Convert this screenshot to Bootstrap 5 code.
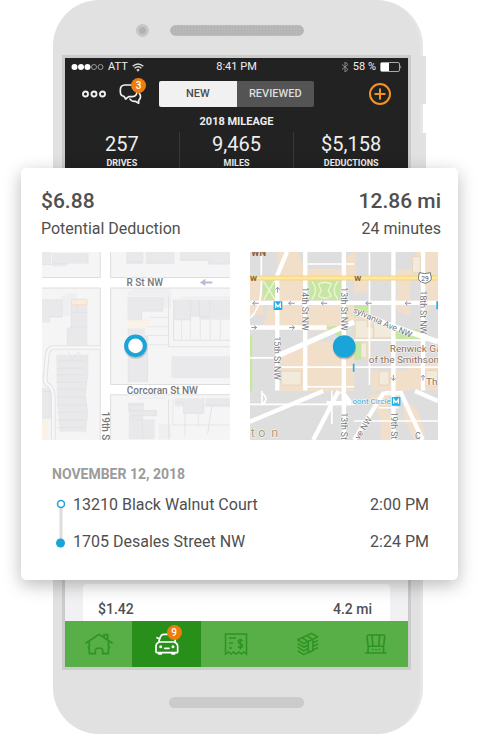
<!DOCTYPE html>
<html lang="en">
<head>
<meta charset="utf-8">
<meta name="viewport" content="width=device-width, initial-scale=1">
<title>Mileage tracker</title>
<link href="https://cdn.jsdelivr.net/npm/bootstrap@5.3.0/dist/css/bootstrap.min.css" rel="stylesheet">
<style>
body{font-family:Roboto,"Open Sans",sans-serif;color:#4f4f4f;background:#fff;overflow-x:hidden}
svg{display:block}
.phone{margin:0 56px 0 53px;padding:0 9px;background:#e1e1e1;border-radius:46px;border-right:3px solid #e6e6e6;position:relative}
.side-key{position:absolute;left:100%;top:56px;width:6px;height:48px;background:#e1e1e1}
.side-key.lower{top:133px;height:60px}
.tri-grid{display:grid;grid-template-columns:1fr auto 1fr;align-items:center}
.phone-top{height:55px;column-gap:21px;padding:5px 0 0 0}
.camera{width:13px;height:13px;border-radius:50%;background:#b2b2b2;border:3px solid #c6c6c6}
.speaker{width:134px;height:11px;border-radius:6px;background:#b8b8b8 radial-gradient(#a9a9a9 1px,transparent 1px) 0 0/3px 3px;border:1px solid #bababa}
.phone-bottom{height:64px}
.home-bar{width:135px;height:11px;border-radius:6px;background:#cbcbcb}
.screen{border:3px solid #cbcbcb;background:#f1f1f3}
.app-head{background:#222;color:#efefef}
.status{height:18px;font-size:11px;line-height:18px;padding:0 6px}
.tools{height:36px}
.icon-btn{background:none;border:0;padding:0;position:relative}
.count{position:absolute;width:15px;height:15px;border-radius:50%;background:#ee7d0c;color:#fff;font-size:10px;line-height:15px;font-weight:500;text-align:center}
.chat-count{left:12px;top:-6px}
.seg{width:155px;height:26px;border-radius:2px;overflow:hidden}
.seg button{border:0;padding:0;font-size:11px;font-weight:500;background:#545454;color:#ddd}
.seg button.on{background:#f1f1f1;color:#4c4c4c}
.head-title{font-size:11px;line-height:20px;font-weight:700;margin:0}
.stat + .stat{border-left:1px solid #383838}
.stat-num{font-size:20px;line-height:24px}
.stat-label{font-size:9px;line-height:14px;font-weight:700}
.trip{margin:-2px -50px 0 -44px;padding:19px 17px 20px 20px;background:#fff;border-radius:5px;box-shadow:0 5px 18px rgba(0,0,0,.27);position:relative;z-index:2}
.big{font-size:21px;line-height:28px;font-weight:500}
.sub{font-size:16px;line-height:28px}
.maps{margin-top:9px;display:grid;grid-template-columns:1fr 1fr;column-gap:20px;padding:0 3px 0 1px}
.maps svg{width:100%}
.maps text{font-family:Roboto,sans-serif;paint-order:stroke;stroke:#fff;stroke-width:3px;stroke-linejoin:round}
.maps .plain{stroke:none}
.legs{padding:0 12px 0 11px;margin-top:24px}
.date{font-size:14px;line-height:20px;font-weight:700;color:#9b9b9b;margin:0 0 2px}
.leg{font-size:16px;line-height:37px}
.next-trip{margin:4px 18px 0;padding:0 18px 0 15px;height:37px;background:#fff;border-radius:4px 4px 0 0;font-size:14px;line-height:50px;font-weight:500}
.tabs{display:grid;grid-template-columns:67fr 69fr 70fr 73fr 64fr;background:#58ae47;height:46px}
.tabs a{color:#2c9420;display:flex;align-items:center;justify-content:center}
.tabs a.on{background:#288f1b;color:#fff}
.tab-icon{position:relative}
.tab-count{left:12px;top:-8px}
</style>
<script src="https://cdn.jsdelivr.net/npm/bootstrap@5.3.0/dist/js/bootstrap.bundle.min.js" defer></script>
</head>
<body>
<main class="phone">
<span class="side-key"></span><span class="side-key lower"></span>
<div class="phone-top tri-grid"><span class="camera ms-auto"></span><span class="speaker"></span><span></span></div>
<div class="screen">
<header class="app-head">
<div class="status tri-grid">
<div class="d-flex align-items-center">
<svg width="33" height="8" viewBox="0 0 33 8"><g fill="#fff"><circle cx="3.500" cy="4" r="3"/><circle cx="10" cy="4" r="3"/><circle cx="16.500" cy="4" r="3"/></g><g fill="none" stroke="#999"><circle cx="23" cy="4" r="2.500"/><circle cx="29.500" cy="4" r="2.500"/></g></svg>
<span class="ms-1 me-1">ATT</span>
<svg width="12" height="9" viewBox="0 0 12 9" fill="none" stroke="#ddd" stroke-width="1.500"><path d="M.7 3.300Q6-1.300 11.300 3.300M2.600 5.300Q6 2.300 9.400 5.300"/><path d="M4.300 6.800Q6 5.300 7.700 6.800L6 8.700Z" fill="#ddd" stroke="none"/></svg>
</div>
<span>8:41 PM</span>
<div class="d-flex align-items-center justify-content-end">
<svg width="8" height="12" viewBox="0 0 8 12" fill="none" stroke="#888"><path d="M1 3.500 7 8.500 4 11V1L7 3.500 1 8.500"/></svg>
<span class="ms-1 me-1">58 %</span>
<svg width="22" height="10" viewBox="0 0 22 10"><rect x=".5" y=".5" width="19" height="9" rx="1.500" fill="none" stroke="#aaa"/><rect x="1" y="1" width="8" height="8" fill="#fff"/><path d="M20.500 3v4q1.500-2 0-4" fill="#ccc"/></svg>
</div>
</div>
<div class="tools tri-grid">
<div class="d-flex align-items-center ps-3 gap-2">
<button class="icon-btn me-1" aria-label="More"><svg width="26" height="8" viewBox="0 0 26 8" fill="none" stroke="#f1f1f1" stroke-width="1.900"><circle cx="4.500" cy="4" r="2.500"/><circle cx="13" cy="4" r="2.500"/><circle cx="21.500" cy="4" r="2.500"/></svg></button>
<button class="icon-btn" aria-label="Messages"><svg width="24" height="21" viewBox="178 84 72 63" fill="none" stroke="#f1f1f1" stroke-width="5" stroke-linejoin="round" stroke-linecap="round"><path d="M229 87H196Q182 88 182 101V107Q182 119 193 121L198 129 207 122H218Q231 121 232 108V102"/><path d="M239 112Q247 124 237 133L237 142 227 136Q215 137 211 129"/></svg><span class="count chat-count">3</span></button>
</div>
<div class="seg d-flex"><button class="on flex-fill w-50">NEW</button><button class="flex-fill w-50">REVIEWED</button></div>
<button class="icon-btn ms-auto me-3" aria-label="Add drive"><svg width="24" height="24" viewBox="0 0 24 24" fill="none" stroke="#f39322" stroke-width="2"><circle cx="12" cy="12" r="10"/><path d="M12 6.500v11M6.500 12h11"/></svg></button>
</div>
<h1 class="head-title text-center">2018 MILEAGE</h1>
<div class="row g-0 text-center">
<div class="col stat"><div class="stat-num">257</div><div class="stat-label">DRIVES</div></div>
<div class="col stat"><div class="stat-num">9,465</div><div class="stat-label">MILES</div></div>
<div class="col stat"><div class="stat-num">$5,158</div><div class="stat-label">DEDUCTIONS</div></div>
</div>
</header>
<section class="trip">
<div class="d-flex justify-content-between big"><span>$6.88</span><span>12.86 mi</span></div>
<div class="d-flex justify-content-between sub"><span>Potential Deduction</span><span>24 minutes</span></div>
<div class="maps">
<svg viewBox="12 12 563 563" role="img" aria-label="Start of the drive">
<path fill="#f5f5f6" d="M12 12h563v563H12z"/>
<g fill="#e9e9eb"><path d="M12 12h26v38H12zM42 15h108v32H88v8H42zM264 12h50v36h-50zM323 12h84v34h-84zM425 12h150v36h-65V38h-85zM12 153h60v54H34v16H12zM100 155h48v136H88V240h10zM268 147h106v42h-62v26h-44zM270 240h46v24h12v138h-58zM406 155h169v60h-92v-8h-26v8h-51zM400 324h175v66H400zM55 320h94v60l-8 60 8 50-8 60H65l-8-90zM12 420h26v90H12zM272 463h45v24h38v15h-40v11h34v60h-77zM410 450h86v45h-60v-20h-26zM502 450h73v26h-73z"/></g>
<g fill="#efeff1"><path d="M268 132l20-10h110v58h-24v-34H268zM70 145l24-10h22v20H98v50H72zM404 155l40-10h131v10zM362 526h36v47h-36zM330 452h50v-6h-80v8z"/></g>
<path fill="#fcecdc" d="M100 154h46v16h-46z" stroke="#f5d6b8" stroke-width="2"/><path fill="#faf2e6" d="M269 215h67v20h-18v5h-49zM12 515h18v58H12z"/>
<path fill="none" stroke="#dfdfe4" stroke-width="2" d="M38 15v35H12M42 47h46M150 17v30M264 42h50V15M323 46h84V15M425 36h85v12h65M34 223v-16h38v-54M88 290V240h12v-70M100 193h46M98 236h48M118 172v22M270 215h40v-26h64v-42M270 240v162M318 240v24h10v138M336 208h55M326 236h65M326 262h65M318 290h73M406 155v60h51v-60M483 155v52h31v-52M430 215v60M456 215v60M486 215v60M516 215v60M546 215v60M272 463v24h83v15h-72v12h30v59M272 470h45M404 450v80h170M410 463h26v32h60v-45M440 495v70M480 495v38M496 470h79M60 338h86M56 360h85M55 380h88M56 402h86M56 423h88M56 446h86M56 470h90M56 492h86M56 515h88M56 538h86M90 310l14 26 16-26 14 26M12 430h24v80H12M149 320v60l-8 55 8 60-8 60"/>
<path fill="none" stroke="#e2e2e3" stroke-width="3" d="M391 186v110h184M406 216v60h169M391 215v-70M391 452v121M520 476l-12 80"/>
<path fill="none" stroke="#dedede" stroke-width="34" d="M202 12v563M12 104h176M217 104h358M217 424h358"/>
<path fill="none" stroke="#e2e2e2" stroke-width="14" d="M188 298H45q-18 2-18 30l-5 55q-4 22 12 30 12 8 12 40v120"/>
<path fill="none" stroke="#f7f7f8" stroke-width="8" d="M188 298H45q-18 2-18 30l-5 55q-4 22 12 30 12 8 12 40v120"/>
<path fill="none" stroke="#fff" stroke-width="28" d="M202 12v563M12 104h563M202 424h373"/>
<path fill="#b8bcd8" d="M485 103l16-11v8h21v6h-21v8z"/>
<g fill="#74787c" font-size="30" font-weight="500"><text x="265" y="115">R St NW</text><text x="266" y="437">Corcoran St NW</text><text transform="translate(193 490) rotate(90)">19th S</text></g>
<circle cx="293" cy="297" r="35" fill="#555" opacity=".25"/><circle cx="292" cy="293" r="28" fill="#fff" stroke="#1ba4d8" stroke-width="12"/>
</svg>
<svg viewBox="14 12 565 565" role="img" aria-label="End of the drive">
<path fill="#dedede" d="M14 12h565v565H14z"/>
<g fill="#f1dfc9"><path d="M97 12h63l16 50h114v-16l30-34h12v80H97zM75 94h112v120h-20v18H56l18-70zM190 160h137v56l-80 34h-60zM14 94h30l10 56v52H14zM90 330l90-50h147v150H105V350H90zM327 94h40v40h-40zM327 210h75l45 24v38H327zM327 275h50l-8 60h-42zM378 368h120v60H378zM455 65h48l10-53h66v82H455zM455 94h40v110l-40-15zM530 94h49v70h-20l-10 35-19 15zM490 350h89v78h-50l-39-8zM368 445l60-12v60l20 10v74h-40v-60zM475 450l45 40 18 60v27h-30l-30-60z"/></g>
<g fill="#f2ebdc" stroke="#e4d5bd" stroke-width="3"><path d="M108 370h60v42h-60zM330 217h36v20h20v34h-56zM385 220h56v50h-56zM335 285h30v45h-30zM402 370h30v42h-30zM542 368h36v46h-36zM502 25h24v50h-24z"/></g>
<g fill="#c7e5a3"><path d="M52 95h38v62H52zM190 95h98v62h-98zM240 238l32-4 16 10v28zM327 172h46v24l-46 12zM445 245h80v32h-75zM327 282h22v54h-22zM14 262h7v168h-7z"/></g>
<path fill="none" stroke="#edf5d5" stroke-width="4" d="M54 98l35 57M88 98L56 155M200 100q22 26 0 54M278 100q-22 26 0 54M220 108q20-10 38 0l-9 20 9 16q-18 14-38 0l8-16z"/>
<path fill="none" stroke="#fff" stroke-width="5" d="M14 210q36-30 34-110V12M179 48h148M14 330h82M96 358h231M179 417h148M327 277h252M327 358h252M373 12v400M14 470h313M50 430v40q24-16 0-34M327 520h252M400 480h60M260 430v100"/>
<path fill="none" stroke="#fff" stroke-width="13" d="M14 165h565M14 239h230M125 12L96 82v346M180 12v416M296 12v565M445 12v565M534 12v416"/>
<path fill="none" stroke="#fff" stroke-width="16" d="M102 322l225-100M327 190l130 50 122 42"/>
<path fill="none" stroke="#fff" stroke-width="13" d="M14 522l220-92M280 430l-76 147M290 430l26 36M244 466h74M327 577l90-144M465 430l68 147M418 436h55M510 430l69 30"/>
<path stroke="#f2d588" stroke-width="15" d="M14 90h565"/><path stroke="#ffe79c" stroke-width="9" d="M14 90h565"/>
<path fill="none" stroke="#9192bd" stroke-width="3" d="M22 166h18M29 160l-7 6 7 6M130 166h18M137 160l-7 6 7 6M228 166h18M235 160l-7 6 7 6M362 166h18M369 160l-7 6 7 6M480 166h18M487 160l-7 6 7 6M18 239h16M27 233l7 6-7 6M132 239h16M141 233l7 6-7 6M97 118v16M91 125l6-7 6 7M445 382v16M439 391l6 7 6-7M534 398v-16M528 389l6-7 6 7"/>
<g fill="#74777a" font-size="26"><text transform="translate(171 118) rotate(90)">14th St NW</text><text transform="translate(287 118) rotate(90)">13th St NW</text><text transform="translate(525 128) rotate(90)">18th St NW</text><text transform="translate(86 266) rotate(90)">15th St NW</text><text transform="translate(286 494) rotate(90)">13th St</text><text transform="translate(439 492) rotate(90)">19th St</text><text transform="translate(322 193) rotate(24)">sylvania Ave NW</text><text transform="translate(342 577) rotate(-58)">ve NW</text><text x="510" y="575">C</text></g>
<g fill="#8c6d59" font-size="30"><text x="434" y="312">Renwick Ga</text><text x="371" y="345">of the Smithson</text><text x="543" y="411">Th</text></g>
<g fill="#8a5f35" font-size="24" font-weight="700"><text class="plain" x="14" y="99">W</text><text class="plain" x="327" y="99">W</text><text class="plain" x="18" y="24" font-size="28">WN</text></g>
<g fill="#a89c76" font-size="38"><text x="16" y="568">t</text><text x="39" y="568">o</text><text x="78" y="568">n</text></g>
<text x="322" y="468" fill="#30a8da" font-size="24">oont Circle</text>
<path fill="#1eaeea" d="M85 160h26v26H85zM440 448h26v26h-26zM574 160h5v24h-5zM323 348h5v24h-5z"/><path fill="none" stroke="#fff" stroke-width="4" d="M91 180v-13l7 9 7-9v13M446 468v-13l7 9 7-9v13"/>
<path d="M523 74q16 6 33 0l3 17q0 10-19 15-20-5-20-15z" fill="#fff" stroke="#777" stroke-width="3"/><text x="529" y="98" fill="#555" font-size="20">29</text>
<circle cx="298" cy="301" r="34" fill="#444" opacity=".3"/><circle cx="297" cy="296" r="34" fill="#1ba4d8"/>
</svg>
</div>
<div class="legs">
<h2 class="date">NOVEMBER 12, 2018</h2>
<div class="d-flex align-items-center">
<svg class="me-2" width="13" height="52" viewBox="0 0 13 52"><path stroke="#ddd" stroke-width="3" d="M9 8v34"/><circle cx="9" cy="7" r="3.500" fill="#fff" stroke="#1ba4d8" stroke-width="1.500"/><circle cx="8.500" cy="46" r="4.500" fill="#1ba4d8"/></svg>
<div class="flex-fill leg"><div class="d-flex justify-content-between"><span>13210 Black Walnut Court</span><span>2:00 PM</span></div><div class="d-flex justify-content-between"><span>1705 Desales Street NW</span><span>2:24 PM</span></div></div>
</div>
</div>
</section>
<div class="next-trip d-flex justify-content-between"><span>$1.42</span><span>4.2 mi</span></div>
<nav class="tabs" aria-label="Main">
<a href="#home" aria-label="Home"><svg width="28" height="22" viewBox="115 176 84 66" fill="none" stroke="currentColor" stroke-width="5" stroke-linejoin="round" stroke-linecap="round"><path d="M118 206l39-26 39 26M172 188v-7h11v16M128 205v10l-3 4 3 5v14h18v-9q0-8 11-8t11 8v9h17v-14l3-5-3-4v-10"/></svg></a>
<a href="#drives" class="on" aria-label="Drives"><span class="tab-icon"><svg width="24" height="22" viewBox="329 176 72 66" fill="none" stroke="currentColor" stroke-width="5" stroke-linejoin="round" stroke-linecap="round"><path d="M341 200l5-14q3-6 9-6h20q7 0 10 6l5 14M335 190l7 3M341 203h46q10 4 10 13v16q0 3-3 3h-58q-4 0-4-3v-16q0-9 9-13M340 236v3h8v-3M380 236v3h8v-3M358 222h13"/><circle cx="346" cy="217" r="2"/><circle cx="383" cy="217" r="2"/></svg><span class="count tab-count">9</span></span></a>
<a href="#expenses" aria-label="Expenses"><svg width="24" height="24" viewBox="0 0 24 24" fill="none" stroke="currentColor" stroke-width="1.500"><path d="M1.500 22V2h21v20l-2.500-2-2.500 2-2.500-2-3 2-2.500-2L7 22l-2.500-2zM5 6h7M5 11h4M5 16h3M18.500 9q-1-1.500-3-1-1.800.7-1 2.500l3.500 2q1.400 2-.8 3-2.200.5-3.200-1.200M16.300 6.500v11"/></svg></a>
<a href="#money" aria-label="Money"><svg width="24" height="24" viewBox="196 172 72 74" fill="none" stroke="currentColor" stroke-width="4.500" stroke-linejoin="round"><path d="M200 196l43-20 19 11-43 21zM214 190l19 12M229 183l18 12M200 208l19 11 14-7M200 219l19 11 14-7M200 230l19 12 14-7M233 202v34l14-7v-34M247 206l16-8M247 217l16-8M247 228l16-8"/></svg></a>
<a href="#taxes" aria-label="Taxes"><svg width="22" height="22" viewBox="412 177 68 66" fill="none" stroke="currentColor" stroke-width="5" stroke-linejoin="round" stroke-linecap="round"><path d="M414 238h63M421 238l1-19-4-31q0-6 6-6h44q6 0 5 6l-4 31 1 19M422 217h47M434 183l2 33M457 183l-2 33M435 227h2M446 227v1M455 227h2"/></svg></a>
</nav>
</div>
<div class="phone-bottom d-flex align-items-center justify-content-center"><span class="home-bar"></span></div>
</main>
</body>
</html>
